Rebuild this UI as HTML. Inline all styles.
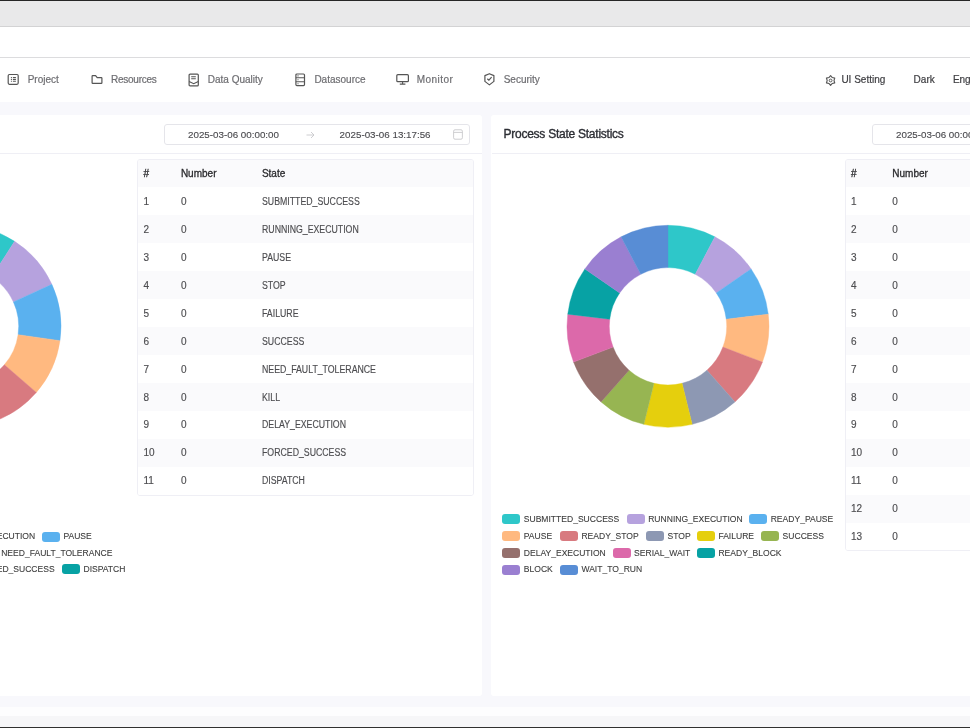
<!DOCTYPE html>
<html><head><meta charset="utf-8"><style>
*{margin:0;padding:0;box-sizing:border-box}
html,body{width:970px;height:728px;overflow:hidden}
#wrap{position:absolute;left:0;top:0;width:970px;height:728px;overflow:hidden;filter:blur(0.3px);will-change:transform}
body{position:relative;background:#f8f8fc;font-family:"Liberation Sans",sans-serif;color:#333}
.abs{position:absolute}
.nav span.t{position:absolute;top:74.3px;font-size:10px;line-height:12px;color:#6e6e72;white-space:nowrap;-webkit-text-stroke-width:0.2px}
.nav svg{position:absolute}
.card{position:absolute}
.cbg{position:absolute;background:#fff;border-radius:3px}
.hdr{position:absolute;left:0;top:0;width:100%;border-bottom:1px solid #efeff5}
.title{position:absolute;left:12px;top:12px;font-size:12px;line-height:14px;color:#2b2d33;white-space:nowrap;letter-spacing:-0.25px;-webkit-text-stroke-width:0.35px}
.dp{position:absolute;left:380.1px;top:9.2px;width:306.1px;height:20.6px;border:1px solid #e5e5ea;border-radius:3px}
.dp span{position:absolute;top:3.1px;font-size:9.8px;line-height:12px;color:#4a4a4e;white-space:nowrap;-webkit-text-stroke-width:0.12px}
.dp .d1{left:23.4px}.dp .d2{left:175px}
.dp .arr{left:141.5px;top:5px}
.dp .cal{position:absolute;left:288px;top:4px}
.chart{position:absolute}
.tbl{position:absolute;border:1px solid #efeff5;border-radius:3px;overflow:hidden}
.tr{position:relative;width:100%}
.tr+.tr{}
.tr span{position:absolute;top:8.7px;font-size:10px;line-height:12px;color:#4d4d50;white-space:nowrap;-webkit-text-stroke-width:0.15px}
.th{background:#fafafc}
.th span{top:7.8px;color:#2b2b2e;-webkit-text-stroke-width:0.3px}
.tr .st{transform:scaleX(0.875);transform-origin:0 0}
.lg{position:absolute;height:12px;white-space:nowrap;transform:translateY(-50%)}
.lg i{position:absolute;left:0;top:1px;width:18px;height:10px;border-radius:3px}
.lg b{position:absolute;left:21.6px;top:-0.6px;font-weight:normal;font-size:8.55px;line-height:12px;color:#3d3d3d;-webkit-text-stroke-width:0.1px}
</style></head><body><div id="wrap">
<div class="abs" style="left:0;top:0;width:970px;height:1.3px;background:#262626"></div>
<div class="abs" style="left:0;top:1.3px;width:970px;height:24.7px;background:#e9e9ea"></div>
<div class="abs" style="left:0;top:26px;width:970px;height:1px;background:#d3d3d4"></div>
<div class="abs" style="left:0;top:27px;width:970px;height:30px;background:#fff"></div>
<div class="abs" style="left:0;top:57px;width:970px;height:1px;background:#dcdcde"></div>
<div class="abs" style="left:0;top:58px;width:970px;height:44px;background:#fff"></div>
<div class="nav"><svg style="left:7px;top:73px" width="13" height="13" viewBox="0 0 13 13"><rect x="1.2" y="1.5" width="10" height="9.8" rx="1.2" fill="none" stroke="#555" stroke-width="1.2"/><path d="M3.9 4.5h1M3.9 6.4h1M3.9 8.3h1M5.9 4.5h3M5.9 6.4h3M5.9 8.3h3" stroke="#555" stroke-width="1.1"/></svg><span class="t" style="left:27.7px">Project</span><svg style="left:90.5px;top:74px" width="13" height="11" viewBox="0 0 13 11"><path d="M1.1 2.3Q1.1 1.7 1.7 1.7H4.6L6.2 3.7H10.3Q10.9 3.7 10.9 4.3V8.7Q10.9 9.3 10.3 9.3H1.7Q1.1 9.3 1.1 8.7Z" fill="none" stroke="#555" stroke-width="1.2" stroke-linejoin="round"/></svg><span class="t" style="left:111px;letter-spacing:-0.25px">Resources</span><svg style="left:188px;top:72.6px" width="11" height="14" viewBox="0 0 11 14"><rect x="1.1" y="1.1" width="9.2" height="11.8" rx="1" fill="none" stroke="#555" stroke-width="1.2"/><path d="M3.2 3.8h4.6M3.2 5.8h4.6M1.1 8.4l4.6 2.3 4.6-2.3" fill="none" stroke="#555" stroke-width="1.1"/></svg><span class="t" style="left:207.8px">Data Quality</span><svg style="left:294.8px;top:72.6px" width="11" height="14" viewBox="0 0 11 14"><rect x="0.9" y="1" width="8.6" height="11.6" rx="1" fill="none" stroke="#555" stroke-width="1.2"/><path d="M0.9 4.8h8.6M0.9 8.7h8.6M2.5 2.9h1M2.5 6.8h1M2.5 10.7h1" stroke="#555" stroke-width="1.1"/></svg><span class="t" style="left:314.4px">Datasource</span><svg style="left:395.8px;top:74.2px" width="14" height="11" viewBox="0 0 14 11"><rect x="0.8" y="0.7" width="11.6" height="7" rx="1" fill="none" stroke="#555" stroke-width="1.2"/><path d="M6.6 7.8v2.2M3.8 10.1h5.6" stroke="#555" stroke-width="1.1"/></svg><span class="t" style="left:416.7px;letter-spacing:0.45px">Monitor</span><svg style="left:483px;top:72px" width="13" height="15" viewBox="0 0 13 15"><path d="M6.4 1.7L10.9 3.6V9.4L6.4 12.9L1.9 9.4V3.6Z" fill="none" stroke="#555" stroke-width="1.2" stroke-linejoin="round"/><path d="M4.3 6.7L5.9 8.2L8.6 5.1" fill="none" stroke="#555" stroke-width="1.2"/></svg><span class="t" style="left:503.7px">Security</span><svg style="left:825px;top:74.5px" width="12" height="11" viewBox="0 0 12 11"><path d="M5.60 0.70L7.30 2.56L9.76 3.10L9.00 5.50L9.76 7.90L7.30 8.44L5.60 10.30L3.90 8.44L1.44 7.90L2.20 5.50L1.44 3.10L3.90 2.56Z" fill="none" stroke="#555" stroke-width="1.1" stroke-linejoin="round"/><circle cx="5.6" cy="5.5" r="1.4" fill="none" stroke="#555" stroke-width="1"/></svg><span class="t" style="left:841.4px;color:#404044">UI Setting</span><span class="t" style="left:913.6px;color:#404044">Dark</span><span class="t" style="left:952.9px;color:#404044">English</span></div>
<div class="cbg" style="left:-216.5px;top:115.3px;width:698.2px;height:581.2px"></div><div class="card" style="left:-216.5px;top:115.3px;width:698.2px;height:581.2px"><div class="hdr" style="height:39.0px"><div class="title">Task State Statistics</div><div class="dp"><span class="d1">2025-03-06 00:00:00</span><span class="arr"><svg width="9" height="8" viewBox="0 0 9 8"><path d="M0.5 4H8M5 1L8 4L5 7" fill="none" stroke="#c8c8cc" stroke-width="0.9"/></svg></span><span class="d2">2025-03-06 13:17:56</span><svg class="cal" width="10" height="11" viewBox="0 0 10 11"><rect x="0.6" y="0.8" width="8.8" height="9.4" rx="1.4" fill="none" stroke="#c8c8cc" stroke-width="0.9"/><path d="M0.6 3.4H9.4" stroke="#c8c8cc" stroke-width="0.9"/></svg></div></div><svg class="chart" width="354" height="560" style="left:0;top:0"><path d="M176.00 110.30A101.0 101.0 0 0 1 230.60 126.33L207.74 161.92A58.7 58.7 0 0 0 176.00 152.60Z" fill="#2ec7c9" stroke="#2ec7c9" stroke-width="0.4"/><path d="M230.60 126.33A101.0 101.0 0 0 1 267.87 169.34L229.40 186.92A58.7 58.7 0 0 0 207.74 161.92Z" fill="#b6a2de" stroke="#b6a2de" stroke-width="0.4"/><path d="M267.87 169.34A101.0 101.0 0 0 1 275.97 225.67L234.10 219.65A58.7 58.7 0 0 0 229.40 186.92Z" fill="#5ab1ef" stroke="#5ab1ef" stroke-width="0.4"/><path d="M275.97 225.67A101.0 101.0 0 0 1 252.33 277.44L220.36 249.74A58.7 58.7 0 0 0 234.10 219.65Z" fill="#ffb980" stroke="#ffb980" stroke-width="0.4"/><path d="M252.33 277.44A101.0 101.0 0 0 1 204.45 308.21L192.54 267.62A58.7 58.7 0 0 0 220.36 249.74Z" fill="#d87a80" stroke="#d87a80" stroke-width="0.4"/><path d="M204.45 308.21A101.0 101.0 0 0 1 147.55 308.21L159.46 267.62A58.7 58.7 0 0 0 192.54 267.62Z" fill="#8d98b3" stroke="#8d98b3" stroke-width="0.4"/><path d="M147.55 308.21A101.0 101.0 0 0 1 99.67 277.44L131.64 249.74A58.7 58.7 0 0 0 159.46 267.62Z" fill="#e5cf0d" stroke="#e5cf0d" stroke-width="0.4"/><path d="M99.67 277.44A101.0 101.0 0 0 1 76.03 225.67L117.90 219.65A58.7 58.7 0 0 0 131.64 249.74Z" fill="#97b552" stroke="#97b552" stroke-width="0.4"/><path d="M76.03 225.67A101.0 101.0 0 0 1 84.13 169.34L122.60 186.92A58.7 58.7 0 0 0 117.90 219.65Z" fill="#95706d" stroke="#95706d" stroke-width="0.4"/><path d="M84.13 169.34A101.0 101.0 0 0 1 121.40 126.33L144.26 161.92A58.7 58.7 0 0 0 122.60 186.92Z" fill="#dc69aa" stroke="#dc69aa" stroke-width="0.4"/><path d="M121.40 126.33A101.0 101.0 0 0 1 176.00 110.30L176.00 152.60A58.7 58.7 0 0 0 144.26 161.92Z" fill="#07a2a4" stroke="#07a2a4" stroke-width="0.4"/></svg><div class="tbl" style="left:353.4px;top:44.2px;width:337.3px"><div class="tr th" style="height:26.8px"><span style="left:5.6px">#</span><span style="left:43.0px">Number</span><span style="left:124.0px">State</span></div><div class="tr" style="height:27.95px;background:#fff"><span style="left:5.6px">1</span><span style="left:43.0px">0</span><span class="st" style="left:124.0px">SUBMITTED_SUCCESS</span></div><div class="tr" style="height:27.95px;background:#fafafc"><span style="left:5.6px">2</span><span style="left:43.0px">0</span><span class="st" style="left:124.0px">RUNNING_EXECUTION</span></div><div class="tr" style="height:27.95px;background:#fff"><span style="left:5.6px">3</span><span style="left:43.0px">0</span><span class="st" style="left:124.0px">PAUSE</span></div><div class="tr" style="height:27.95px;background:#fafafc"><span style="left:5.6px">4</span><span style="left:43.0px">0</span><span class="st" style="left:124.0px">STOP</span></div><div class="tr" style="height:27.95px;background:#fff"><span style="left:5.6px">5</span><span style="left:43.0px">0</span><span class="st" style="left:124.0px">FAILURE</span></div><div class="tr" style="height:27.95px;background:#fafafc"><span style="left:5.6px">6</span><span style="left:43.0px">0</span><span class="st" style="left:124.0px">SUCCESS</span></div><div class="tr" style="height:27.95px;background:#fff"><span style="left:5.6px">7</span><span style="left:43.0px">0</span><span class="st" style="left:124.0px">NEED_FAULT_TOLERANCE</span></div><div class="tr" style="height:27.95px;background:#fafafc"><span style="left:5.6px">8</span><span style="left:43.0px">0</span><span class="st" style="left:124.0px">KILL</span></div><div class="tr" style="height:27.95px;background:#fff"><span style="left:5.6px">9</span><span style="left:43.0px">0</span><span class="st" style="left:124.0px">DELAY_EXECUTION</span></div><div class="tr" style="height:27.95px;background:#fafafc"><span style="left:5.6px">10</span><span style="left:43.0px">0</span><span class="st" style="left:124.0px">FORCED_SUCCESS</span></div><div class="tr" style="height:27.95px;background:#fff"><span style="left:5.6px">11</span><span style="left:43.0px">0</span><span class="st" style="left:124.0px">DISPATCH</span></div></div><div class="lg" style="left:135.6px;top:421.49999999999994px"><i style="background:#b6a2de"></i><b>RUNNING_EXECUTION</b></div><div class="lg" style="left:258.3px;top:421.49999999999994px"><i style="background:#5ab1ef"></i><b>PAUSE</b></div><div class="lg" style="left:196.1px;top:437.8px"><i style="background:#e5cf0d"></i><b>NEED_FAULT_TOLERANCE</b></div><div class="lg" style="left:167.4px;top:454.2px"><i style="background:#dc69aa"></i><b>FORCED_SUCCESS</b></div><div class="lg" style="left:278.4px;top:454.2px"><i style="background:#07a2a4"></i><b>DISPATCH</b></div></div>
<div class="cbg" style="left:490.7px;top:115.3px;width:699.0px;height:581.2px"></div><div class="card" style="left:491.5px;top:115.3px;width:698.2px;height:581.2px"><div class="hdr" style="height:39.0px"><div class="title">Process State Statistics</div><div class="dp"><span class="d1">2025-03-06 00:00:00</span><span class="arr"><svg width="9" height="8" viewBox="0 0 9 8"><path d="M0.5 4H8M5 1L8 4L5 7" fill="none" stroke="#c8c8cc" stroke-width="0.9"/></svg></span><span class="d2">2025-03-06 13:17:56</span><svg class="cal" width="10" height="11" viewBox="0 0 10 11"><rect x="0.6" y="0.8" width="8.8" height="9.4" rx="1.4" fill="none" stroke="#c8c8cc" stroke-width="0.9"/><path d="M0.6 3.4H9.4" stroke="#c8c8cc" stroke-width="0.9"/></svg></div></div><svg class="chart" width="354" height="560" style="left:0;top:0"><path d="M176.00 110.30A101.0 101.0 0 0 1 222.94 121.87L203.28 159.32A58.7 58.7 0 0 0 176.00 152.60Z" fill="#2ec7c9" stroke="#2ec7c9" stroke-width="0.4"/><path d="M222.94 121.87A101.0 101.0 0 0 1 259.12 153.93L224.31 177.95A58.7 58.7 0 0 0 203.28 159.32Z" fill="#b6a2de" stroke="#b6a2de" stroke-width="0.4"/><path d="M259.12 153.93A101.0 101.0 0 0 1 276.26 199.13L234.27 204.22A58.7 58.7 0 0 0 224.31 177.95Z" fill="#5ab1ef" stroke="#5ab1ef" stroke-width="0.4"/><path d="M276.26 199.13A101.0 101.0 0 0 1 270.44 247.12L230.89 232.12A58.7 58.7 0 0 0 234.27 204.22Z" fill="#ffb980" stroke="#ffb980" stroke-width="0.4"/><path d="M270.44 247.12A101.0 101.0 0 0 1 242.98 286.90L214.93 255.24A58.7 58.7 0 0 0 230.89 232.12Z" fill="#d87a80" stroke="#d87a80" stroke-width="0.4"/><path d="M242.98 286.90A101.0 101.0 0 0 1 200.17 309.37L190.05 268.29A58.7 58.7 0 0 0 214.93 255.24Z" fill="#8d98b3" stroke="#8d98b3" stroke-width="0.4"/><path d="M200.17 309.37A101.0 101.0 0 0 1 151.83 309.37L161.95 268.29A58.7 58.7 0 0 0 190.05 268.29Z" fill="#e5cf0d" stroke="#e5cf0d" stroke-width="0.4"/><path d="M151.83 309.37A101.0 101.0 0 0 1 109.02 286.90L137.07 255.24A58.7 58.7 0 0 0 161.95 268.29Z" fill="#97b552" stroke="#97b552" stroke-width="0.4"/><path d="M109.02 286.90A101.0 101.0 0 0 1 81.56 247.12L121.11 232.12A58.7 58.7 0 0 0 137.07 255.24Z" fill="#95706d" stroke="#95706d" stroke-width="0.4"/><path d="M81.56 247.12A101.0 101.0 0 0 1 75.74 199.13L117.73 204.22A58.7 58.7 0 0 0 121.11 232.12Z" fill="#dc69aa" stroke="#dc69aa" stroke-width="0.4"/><path d="M75.74 199.13A101.0 101.0 0 0 1 92.88 153.93L127.69 177.95A58.7 58.7 0 0 0 117.73 204.22Z" fill="#07a2a4" stroke="#07a2a4" stroke-width="0.4"/><path d="M92.88 153.93A101.0 101.0 0 0 1 129.06 121.87L148.72 159.32A58.7 58.7 0 0 0 127.69 177.95Z" fill="#9a7fd1" stroke="#9a7fd1" stroke-width="0.4"/><path d="M129.06 121.87A101.0 101.0 0 0 1 176.00 110.30L176.00 152.60A58.7 58.7 0 0 0 148.72 159.32Z" fill="#588dd5" stroke="#588dd5" stroke-width="0.4"/></svg><div class="tbl" style="left:353.4px;top:44.2px;width:337.3px"><div class="tr th" style="height:26.8px"><span style="left:5.1px">#</span><span style="left:46.4px">Number</span><span style="left:124.0px">State</span></div><div class="tr" style="height:27.95px;background:#fff"><span style="left:5.1px">1</span><span style="left:46.4px">0</span><span class="st" style="left:124.0px">SUBMITTED_SUCCESS</span></div><div class="tr" style="height:27.95px;background:#fafafc"><span style="left:5.1px">2</span><span style="left:46.4px">0</span><span class="st" style="left:124.0px">RUNNING_EXECUTION</span></div><div class="tr" style="height:27.95px;background:#fff"><span style="left:5.1px">3</span><span style="left:46.4px">0</span><span class="st" style="left:124.0px">READY_PAUSE</span></div><div class="tr" style="height:27.95px;background:#fafafc"><span style="left:5.1px">4</span><span style="left:46.4px">0</span><span class="st" style="left:124.0px">PAUSE</span></div><div class="tr" style="height:27.95px;background:#fff"><span style="left:5.1px">5</span><span style="left:46.4px">0</span><span class="st" style="left:124.0px">READY_STOP</span></div><div class="tr" style="height:27.95px;background:#fafafc"><span style="left:5.1px">6</span><span style="left:46.4px">0</span><span class="st" style="left:124.0px">STOP</span></div><div class="tr" style="height:27.95px;background:#fff"><span style="left:5.1px">7</span><span style="left:46.4px">0</span><span class="st" style="left:124.0px">FAILURE</span></div><div class="tr" style="height:27.95px;background:#fafafc"><span style="left:5.1px">8</span><span style="left:46.4px">0</span><span class="st" style="left:124.0px">SUCCESS</span></div><div class="tr" style="height:27.95px;background:#fff"><span style="left:5.1px">9</span><span style="left:46.4px">0</span><span class="st" style="left:124.0px">DELAY_EXECUTION</span></div><div class="tr" style="height:27.95px;background:#fafafc"><span style="left:5.1px">10</span><span style="left:46.4px">0</span><span class="st" style="left:124.0px">SERIAL_WAIT</span></div><div class="tr" style="height:27.95px;background:#fff"><span style="left:5.1px">11</span><span style="left:46.4px">0</span><span class="st" style="left:124.0px">READY_BLOCK</span></div><div class="tr" style="height:27.95px;background:#fafafc"><span style="left:5.1px">12</span><span style="left:46.4px">0</span><span class="st" style="left:124.0px">BLOCK</span></div><div class="tr" style="height:27.95px;background:#fff"><span style="left:5.1px">13</span><span style="left:46.4px">0</span><span class="st" style="left:124.0px">WAIT_TO_RUN</span></div></div><div class="lg" style="left:10.699999999999989px;top:404.09999999999997px"><i style="background:#2ec7c9"></i><b>SUBMITTED_SUCCESS</b></div><div class="lg" style="left:135.10000000000002px;top:404.09999999999997px"><i style="background:#b6a2de"></i><b>RUNNING_EXECUTION</b></div><div class="lg" style="left:257.6px;top:404.09999999999997px"><i style="background:#5ab1ef"></i><b>READY_PAUSE</b></div><div class="lg" style="left:10.699999999999989px;top:421.09999999999997px"><i style="background:#ffb980"></i><b>PAUSE</b></div><div class="lg" style="left:68.29999999999995px;top:421.09999999999997px"><i style="background:#d87a80"></i><b>READY_STOP</b></div><div class="lg" style="left:154.39999999999998px;top:421.09999999999997px"><i style="background:#8d98b3"></i><b>STOP</b></div><div class="lg" style="left:205.29999999999995px;top:421.09999999999997px"><i style="background:#e5cf0d"></i><b>FAILURE</b></div><div class="lg" style="left:269.5px;top:421.09999999999997px"><i style="background:#97b552"></i><b>SUCCESS</b></div><div class="lg" style="left:10.699999999999989px;top:437.8px"><i style="background:#95706d"></i><b>DELAY_EXECUTION</b></div><div class="lg" style="left:121.0px;top:437.8px"><i style="background:#dc69aa"></i><b>SERIAL_WAIT</b></div><div class="lg" style="left:205.29999999999995px;top:437.8px"><i style="background:#07a2a4"></i><b>READY_BLOCK</b></div><div class="lg" style="left:10.699999999999989px;top:454.59999999999997px"><i style="background:#9a7fd1"></i><b>BLOCK</b></div><div class="lg" style="left:68.29999999999995px;top:454.59999999999997px"><i style="background:#588dd5"></i><b>WAIT_TO_RUN</b></div></div>
<div class="abs" style="left:0;top:707px;width:970px;height:9px;background:#fdfdfe"></div>
<div class="abs" style="left:0;top:716px;width:970px;height:10.5px;background:#f6f6f8"></div>
<div class="abs" style="left:0;top:726.5px;width:970px;height:1.5px;background:#303030"></div>
</div></body></html>
